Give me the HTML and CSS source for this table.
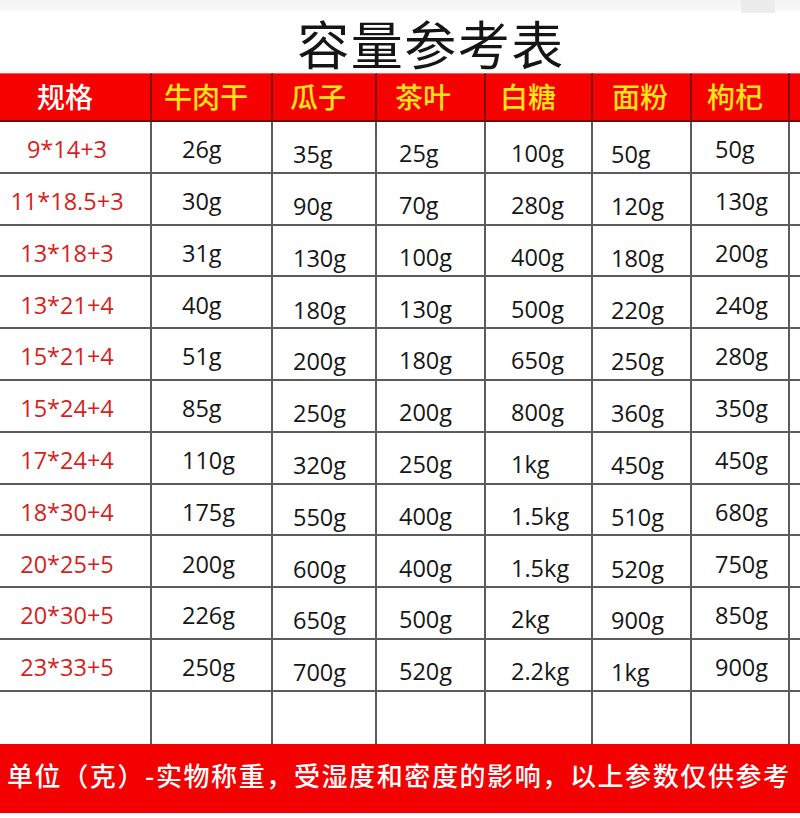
FILE: index.html
```html
<!DOCTYPE html>
<html lang="zh-CN">
<head>
<meta charset="utf-8">
<title>容量参考表</title>
<link rel="stylesheet" href="styles.css">
</head>
<body>
<div class="page">
  <div class="topstrip"><span class="tab"></span></div>
  <h1 class="title">容量参考表</h1>
  <div class="table">
    <div class="hd c0 white">规格</div>
    <div class="hd c1">牛肉干</div>
    <div class="hd c2">瓜子</div>
    <div class="hd c3">茶叶</div>
    <div class="hd c4">白糖</div>
    <div class="hd c5">面粉</div>
    <div class="hd c6">枸杞</div>
    <div class="hd c7"></div>

    <div class="td c0">9*14+3</div><div class="td c1">26g</div><div class="td c2">35g</div><div class="td c3">25g</div><div class="td c4">100g</div><div class="td c5">50g</div><div class="td c6">50g</div><div class="td c7"></div>
    <div class="td c0">11*18.5+3</div><div class="td c1">30g</div><div class="td c2">90g</div><div class="td c3">70g</div><div class="td c4">280g</div><div class="td c5">120g</div><div class="td c6">130g</div><div class="td c7"></div>
    <div class="td c0">13*18+3</div><div class="td c1">31g</div><div class="td c2">130g</div><div class="td c3">100g</div><div class="td c4">400g</div><div class="td c5">180g</div><div class="td c6">200g</div><div class="td c7"></div>
    <div class="td c0">13*21+4</div><div class="td c1">40g</div><div class="td c2">180g</div><div class="td c3">130g</div><div class="td c4">500g</div><div class="td c5">220g</div><div class="td c6">240g</div><div class="td c7"></div>
    <div class="td c0">15*21+4</div><div class="td c1">51g</div><div class="td c2">200g</div><div class="td c3">180g</div><div class="td c4">650g</div><div class="td c5">250g</div><div class="td c6">280g</div><div class="td c7"></div>
    <div class="td c0">15*24+4</div><div class="td c1">85g</div><div class="td c2">250g</div><div class="td c3">200g</div><div class="td c4">800g</div><div class="td c5">360g</div><div class="td c6">350g</div><div class="td c7"></div>
    <div class="td c0">17*24+4</div><div class="td c1">110g</div><div class="td c2">320g</div><div class="td c3">250g</div><div class="td c4">1kg</div><div class="td c5">450g</div><div class="td c6">450g</div><div class="td c7"></div>
    <div class="td c0">18*30+4</div><div class="td c1">175g</div><div class="td c2">550g</div><div class="td c3">400g</div><div class="td c4">1.5kg</div><div class="td c5">510g</div><div class="td c6">680g</div><div class="td c7"></div>
    <div class="td c0">20*25+5</div><div class="td c1">200g</div><div class="td c2">600g</div><div class="td c3">400g</div><div class="td c4">1.5kg</div><div class="td c5">520g</div><div class="td c6">750g</div><div class="td c7"></div>
    <div class="td c0">20*30+5</div><div class="td c1">226g</div><div class="td c2">650g</div><div class="td c3">500g</div><div class="td c4">2kg</div><div class="td c5">900g</div><div class="td c6">850g</div><div class="td c7"></div>
    <div class="td c0">23*33+5</div><div class="td c1">250g</div><div class="td c2">700g</div><div class="td c3">520g</div><div class="td c4">2.2kg</div><div class="td c5">1kg</div><div class="td c6">900g</div><div class="td c7"></div>
    <div class="td c0 last"></div><div class="td c1 last"></div><div class="td c2 last"></div><div class="td c3 last"></div><div class="td c4 last"></div><div class="td c5 last"></div><div class="td c6 last"></div><div class="td c7 last"></div>
  </div>
  <div class="footer">单位（克）-实物称重，受湿度和密度的影响，以上参数仅供参考</div>
</div>
</body>
</html>
```

FILE: styles.css
```css
* { box-sizing: border-box; }
html, body { margin: 0; padding: 0; background: #fff; }
body {
  width: 800px;
  height: 818px;
  overflow: hidden;
  font-family: "Open Sans", "Noto Sans CJK SC", sans-serif;
}
.page { width: 800px; }

.topstrip {
  height: 12px;
  background: linear-gradient(#f3f3f3, #fafafa);
  display: flex;
  justify-content: flex-end;
  padding-right: 25px;
}
.tab {
  width: 34px;
  height: 13px;
  background: #ececec;
}

.title {
  margin: 0;
  height: 61px;
  display: flex;
  align-items: center;
  justify-content: center;
  padding-left: 62px;
  font-family: "Noto Sans CJK SC", sans-serif;
  font-weight: 400;
  font-size: 52px;
  letter-spacing: 1.5px;
  color: #151515;
  line-height: 1;
}

.table {
  display: grid;
  grid-template-columns: 152px 121px 104px 109px 107px 99px 98px 10px;
  grid-template-rows: 49px;
  grid-auto-rows: 51.8px;
}

.hd {
  background: #f70000;
  border-top: 1px solid #ff5a5a;
  border-right: 2px solid #7a1212;
  border-bottom: 2px solid #6a0a0a;
  color: #ffe419;
  font-family: "Noto Sans CJK SC", sans-serif;
  font-weight: 500;
  font-size: 28px;
  display: flex;
  align-items: center;
  padding-bottom: 2px;
}
.hd.white { color: #ffffff; }
.hd.c0 { justify-content: center; padding-right: 20px; }
.hd.c1 { padding-left: 12px; }
.hd.c2 { padding-left: 17px; }
.hd.c3 { padding-left: 18px; }
.hd.c4 { padding-left: 14px; }
.hd.c5 { padding-left: 19px; }
.hd.c6 { padding-left: 15px; }
.hd.c7 { border-right: none; }

.td {
  border-right: 2px solid #5c5c5c;
  border-bottom: 2px solid #5c5c5c;
  font-size: 23.5px;
  color: #161616;
  display: flex;
  align-items: center;
  line-height: 1;
  white-space: nowrap;
}
.td.last { border-bottom: none; }
.td.c0 {
  color: #d71e1e;
  justify-content: center;
  padding-right: 16px;
  padding-top: 6px;
}
.td.c1 { padding-left: 30px; padding-top: 6px; }
.td.c2 { padding-left: 20px; padding-top: 16px; }
.td.c3 { padding-left: 22px; padding-top: 14px; }
.td.c4 { padding-left: 25px; padding-top: 14px; }
.td.c5 { padding-left: 18px; padding-top: 16px; }
.td.c6 { padding-left: 23px; padding-top: 6px; }
.td.c7 { border-right: none; }

.footer {
  height: 69px;
  background: #f40000;
  color: #ffffff;
  font-family: "Noto Sans CJK SC", sans-serif;
  font-weight: 500;
  font-size: 26px;
  display: flex;
  align-items: center;
  padding-left: 7px;
  padding-bottom: 8px;
  white-space: nowrap;
  letter-spacing: 1.6px;
}
```
